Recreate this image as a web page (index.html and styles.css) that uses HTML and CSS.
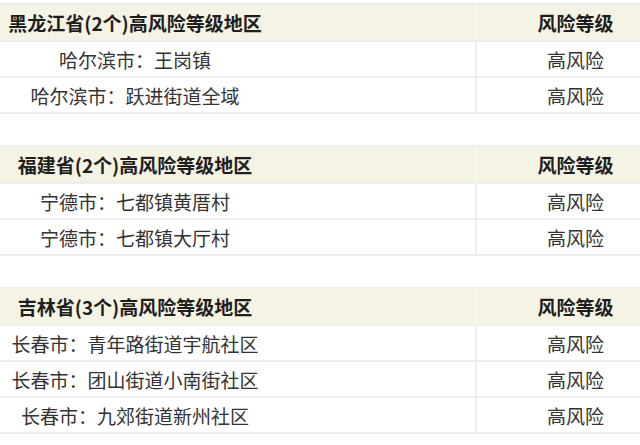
FILE: index.html
```html
<!DOCTYPE html>
<html lang="zh-CN">
<head>
<meta charset="utf-8">
<link rel="stylesheet" href="styles.css">
</head>
<body>
<div class="page">
  <div class="sec">
    <div class="row head"><div class="c1">黑龙江省(2个)高风险等级地区</div><div class="c2">风险等级</div></div>
    <div class="row"><div class="c1">哈尔滨市：王岗镇</div><div class="c2">高风险</div></div>
    <div class="row"><div class="c1">哈尔滨市：跃进街道全域</div><div class="c2">高风险</div></div>
  </div>
  <div class="sec">
    <div class="row head"><div class="c1">福建省(2个)高风险等级地区</div><div class="c2">风险等级</div></div>
    <div class="row"><div class="c1">宁德市：七都镇黄厝村</div><div class="c2">高风险</div></div>
    <div class="row"><div class="c1">宁德市：七都镇大厅村</div><div class="c2">高风险</div></div>
  </div>
  <div class="sec">
    <div class="row head"><div class="c1">吉林省(3个)高风险等级地区</div><div class="c2">风险等级</div></div>
    <div class="row"><div class="c1">长春市：青年路街道宇航社区</div><div class="c2">高风险</div></div>
    <div class="row"><div class="c1">长春市：团山街道小南街社区</div><div class="c2">高风险</div></div>
    <div class="row"><div class="c1">长春市：九郊街道新州社区</div><div class="c2">高风险</div></div>
  </div>
</div>
</body>
</html>
```
FILE: styles.css
```css
html, body {
  margin: 0;
  padding: 0;
  background: #ffffff;
}
body {
  width: 640px;
  height: 445px;
  overflow: hidden;
  font-family: "Noto Sans CJK SC", "Noto Sans", sans-serif;
  font-size: 19px;
  color: #333333;
}
.page {
  padding-top: 3px;
  display: flex;
  flex-direction: column;
  gap: 31px;
}
.sec {
  border-top: 2px solid #eeeeee;
}
.row {
  display: flex;
  height: 34px;
  border-bottom: 2px solid #eeeeee;
}
.row.head {
  height: 35px;
  background: #f5f3e3;
  font-weight: bold;
  color: #1e1e1e;
}
.c1 {
  width: 477px;
  box-sizing: border-box;
  padding-right: 205px;
  border-right: 2px solid #efefef;
  display: flex;
  align-items: center;
  justify-content: center;
  white-space: nowrap;
  letter-spacing: 0;
}
.head .c1 {
  border-right-color: #f9f8ee;
}
.c2 {
  flex: 1;
  padding-left: 34px;
  display: flex;
  align-items: center;
  justify-content: center;
  white-space: nowrap;
}
```
